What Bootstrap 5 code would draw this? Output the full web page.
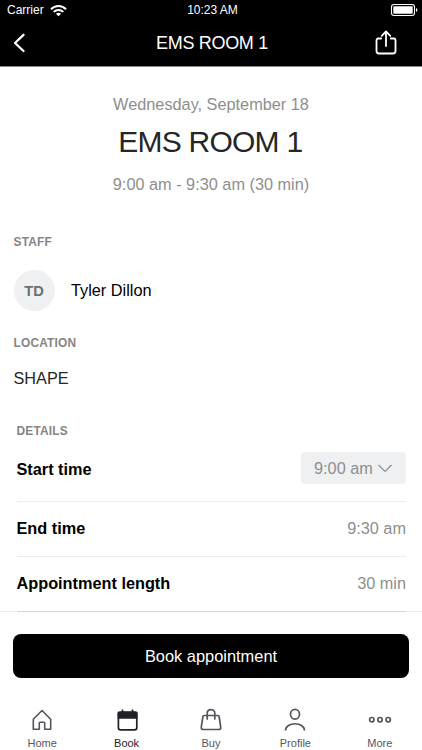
<!DOCTYPE html>
<html lang="en">
<head>
<meta charset="utf-8">
<meta name="viewport" content="width=device-width, initial-scale=1">
<title>EMS ROOM 1</title>
<link href="https://cdn.jsdelivr.net/npm/bootstrap@5.3.0/dist/css/bootstrap.min.css" rel="stylesheet">
<style>
body{font-family:"Liberation Sans",Arial,sans-serif;font-size:16.3px;line-height:20px;color:#000;height:750px;overflow:hidden}
svg{display:block;flex:none}
.status{height:20px;padding:0 4px 0 7px;font-size:12px}
.status>*{flex:1 1 0}
.wifi{margin-left:6px}
.titlebar{height:47px;padding:0 24px 0 12px;border-bottom:1px solid #8d8787}
.titlebar h1{font-size:18px;line-height:20px;letter-spacing:-.32px;padding-left:14px}
.side{width:24px}
.muted{color:#8e8e8e}
.summary{padding-top:27px}
.summary h2{font-size:30px;line-height:36px;color:#262626;letter-spacing:-.75px;margin:10px 0 14px;padding-right:1.5px}
.label{font-size:11.9px;line-height:14px;font-weight:700;color:#858585;letter-spacing:.2px}
.avatar{width:41px;height:41px;background:#eff0f2;color:#6b6e74;font-size:14.7px}
.staffbox{padding:41px 14px 0 13.5px}
.person{margin-top:21px;gap:16.500px}
.person span+span{padding-bottom:1px}
.loc{margin-top:25px}
.shape{margin-top:18px;color:#262626}
.detailbox{padding:36px 16px 0 16.500px}
.detail{height:55px;border-bottom:1px solid #ececec;padding-bottom:2px}
.detail.first{height:64px}
.detail.last{border-color:#d4d4d4}
.pick{height:32px;width:105px;background:#eff0f2;border:0;border-radius:4px;padding:0 14px 0 13px;margin-bottom:1px}
.edge i{width:16px;height:1px;background:#eee;margin-top:-1px}
.book{width:396px;height:44px;border-radius:8px;background:#000;font-size:16.4px;margin:22px 13px 0;padding:0}
.tabs{padding-top:30px}
.tabs a{width:84.4px;font-size:11px;line-height:13px;color:#55565d}
.tabs a.active{color:#202027}
.tabs span{margin-top:3px}
</style>
<script src="https://cdn.jsdelivr.net/npm/bootstrap@5.3.0/dist/js/bootstrap.bundle.min.js"></script>
</head>
<body class="bg-white d-flex flex-column">
<header class="bg-black text-white">
  <div class="status d-flex align-items-center">
    <div class="d-flex align-items-center"><span>Carrier</span>
      <svg class="wifi" width="17" height="13" viewBox="0 0 17 13" fill="none" stroke="#fff" stroke-width="2"><path d="M1 5.200C5.200.9 11.800.9 16 5.200M3.700 7.900c2.700-2.700 6.900-2.700 9.600 0"/><path d="M8.500 12.200 5.900 9.700c1.500-1.200 3.700-1.200 5.200 0z" fill="#fff" stroke="none"/></svg>
    </div>
    <div class="text-center"><span>10:23 AM</span></div>
    <div class="d-flex justify-content-end"><svg width="28" height="14" viewBox="0 0 28 14"><rect x="1.500" y="1.500" width="23" height="11" rx="2.500" fill="none" stroke="#fff" stroke-width="1.100"/><rect x="3.300" y="3.300" width="19.400" height="7.400" rx=".7" fill="#fff"/><path d="M26 5v4q1.400-.5 1.400-2T26 5" fill="#fff"/></svg></div>
  </div>
  <div class="titlebar d-flex align-items-center justify-content-between">
    <div class="side"><svg width="14" height="20" viewBox="0 0 14 20" fill="none" stroke="#fff" stroke-width="2.300" stroke-linecap="round" stroke-linejoin="round"><path d="M11.500 1.800 3 10l8.500 8"/></svg></div>
    <h1 class="m-0 fw-normal">EMS ROOM 1</h1>
    <div class="side"><svg width="24" height="28" viewBox="0 0 24 28" fill="none" stroke="#fff" stroke-width="1.800" stroke-linecap="round" stroke-linejoin="round"><path d="M7.200 9.500H4.200Q2.500 9.500 2.500 11.500v10.500Q2.500 24.500 5 24.500h14Q21.500 24.500 21.500 22v-10.500Q21.500 9.500 19.800 9.500h-3M12 17V2.800M7.700 6.800 12 2.500l4.300 4.300"/></svg></div>
  </div>
</header>
<main>
  <section class="summary text-center">
    <div class="muted">Wednesday, September 18</div>
    <h2 class="fw-normal">EMS ROOM 1</h2>
    <div class="muted">9:00 am - 9:30 am (30 min)</div>
  </section>
  <section class="staffbox">
    <div class="label">STAFF</div>
    <div class="d-flex align-items-center person"><span class="avatar rounded-circle d-flex align-items-center justify-content-center fw-bold">TD</span><span>Tyler Dillon</span></div>
    <div class="label loc">LOCATION</div>
    <div class="shape">SHAPE</div>
  </section>
  <section class="detailbox">
    <div class="label">DETAILS</div>
    <div class="detail first d-flex align-items-center justify-content-between"><strong>Start time</strong>
      <button class="pick muted d-flex align-items-center justify-content-between"><span>9:00 am</span><svg width="14" height="9" viewBox="0 0 14 9" fill="none" stroke="#8e8e8e" stroke-width="1.200"><path d="m.5 1 6.500 6.500L13.500 1"/></svg></button></div>
    <div class="detail d-flex align-items-center justify-content-between"><strong>End time</strong><span class="muted">9:30 am</span></div>
    <div class="detail last d-flex align-items-center justify-content-between"><strong>Appointment length</strong><span class="muted">30 min</span></div>
  </section>
</main>
<footer>
  <div class="edge d-flex justify-content-between"><i></i><i></i></div>
  <button class="book btn btn-dark border-0 d-flex align-items-center justify-content-center"><span>Book appointment</span></button>
  <nav class="tabs d-flex">
    <a class="text-decoration-none d-flex flex-column align-items-center" href="#"><svg width="24" height="26" viewBox="0 0 24 26" fill="none" stroke="currentColor" stroke-width="1.600" stroke-linejoin="round"><path d="M3.300 11.300 12 2.500l8.700 8.800v10h-6v-6.300q0-.7-.7-.7h-4q-.7 0-.7.700v6.300h-6z"/></svg><span>Home</span></a>
    <a class="active text-decoration-none d-flex flex-column align-items-center" href="#"><svg width="24" height="26" viewBox="0 0 24 26" fill="none" stroke="currentColor" stroke-width="1.700"><rect x="3.400" y="4" width="18.400" height="17.800" rx="2"/><path d="M3.500 4.500h18v5.500h-18z" fill="currentColor"/><path d="M7.500 1.500v3M17.500 1.500v3"/></svg><span>Book</span></a>
    <a class="text-decoration-none d-flex flex-column align-items-center" href="#"><svg width="24" height="26" viewBox="0 0 24 26" fill="none" stroke="currentColor" stroke-width="1.700" stroke-linecap="round" stroke-linejoin="round"><path d="M5.200 7.500h13.600q1.100 0 1.300 1L21.700 19q.3 2.500-2 2.500H4.300q-2.300 0-2-2.500L3.900 8.500q.2-1 1.300-1zM8.200 11V5.300c0-5 7.600-5 7.600 0V11"/></svg><span>Buy</span></a>
    <a class="text-decoration-none d-flex flex-column align-items-center" href="#"><svg width="24" height="26" viewBox="0 0 24 26" fill="none" stroke="currentColor" stroke-width="1.700"><ellipse cx="12" cy="6.300" rx="4.500" ry="4.900"/><path d="M2.500 22.500c0-9 19-9 19 0"/></svg><span>Profile</span></a>
    <a class="text-decoration-none d-flex flex-column align-items-center" href="#"><svg width="24" height="26" viewBox="0 0 24 26" fill="none" stroke="currentColor" stroke-width="1.700"><circle cx="3.800" cy="11.700" r="2.200"/><circle cx="12" cy="11.700" r="2.200"/><circle cx="20.200" cy="11.700" r="2.200"/></svg><span>More</span></a>
  </nav>
</footer>
</body>
</html>
